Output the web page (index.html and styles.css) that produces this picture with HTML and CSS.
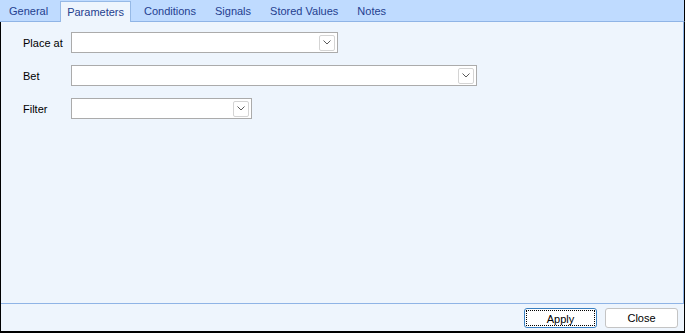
FILE: index.html
```html
<!DOCTYPE html>
<html lang="en">
<head>
  <meta charset="UTF-8" />
  <title>Parameters</title>
  <link rel="stylesheet" href="styles.css">
</head>
<body>

  <div class="window">
    <div class="tabs">
      <div class="tab">General</div>
      <div class="tab active">Parameters</div>
      <div class="tab">Conditions</div>
      <div class="tab">Signals</div>
      <div class="tab">Stored Values</div>
      <div class="tab">Notes</div>
    </div>

    <div class="frame">
      <div class="page">
        <div class="row">
          <span class="label">Place at</span>
          <div class="combo combo-md">
            <span class="drop">
              <svg width="8" height="5" viewBox="0 0 8 5"><polyline points="0.5,0.5 4,4 7.5,0.5" fill="none" stroke="#5a5a5a" stroke-width="1"/></svg>
            </span>
          </div>
        </div>
        <div class="row">
          <span class="label">Bet</span>
          <div class="combo combo-lg">
            <span class="drop">
              <svg width="8" height="5" viewBox="0 0 8 5"><polyline points="0.5,0.5 4,4 7.5,0.5" fill="none" stroke="#5a5a5a" stroke-width="1"/></svg>
            </span>
          </div>
        </div>
        <div class="row">
          <span class="label">Filter</span>
          <div class="combo combo-sm">
            <span class="drop">
              <svg width="8" height="5" viewBox="0 0 8 5"><polyline points="0.5,0.5 4,4 7.5,0.5" fill="none" stroke="#5a5a5a" stroke-width="1"/></svg>
            </span>
          </div>
        </div>
      </div>

      <div class="footer">
        <button class="btn default"><span class="focus">Apply</span></button>
        <button class="btn">Close</button>
      </div>
    </div>
  </div>

</body>
</html>
```

FILE: styles.css
```css
body {
  margin: 0;
  font-family: 'Liberation Sans', Arial, sans-serif;
  font-size: 11px;
  color: #000;
  background: #000;
}

.window {
  width: 685px;
  height: 333px;
  display: flex;
  flex-direction: column;
  background: #eef5fd;
}

.tabs {
  height: 22px;
  box-sizing: border-box;
  display: flex;
  align-items: flex-end;
  gap: 1px;
  padding-left: 1px;
  background: #bfdbff;
  border-bottom: 1px solid #8fb4e6;
  border-right: 1px solid #000;
}

.tab {
  height: 20px;
  line-height: 20px;
  padding: 0 9px;
  color: #24408f;
  white-space: nowrap;
}

.tab:first-child {
  padding: 0 8px;
}

.tab.active {
  height: 21px;
  margin-bottom: -1px;
  margin-left: 3px;
  margin-right: 3px;
  padding: 0 6px;
  line-height: 20px;
  background: #eef5fd;
  border: 1px solid #96b9e6;
  border-bottom: none;
  box-sizing: border-box;
}

.frame {
  flex: 1;
  display: flex;
  flex-direction: column;
  border-left: 1px solid #000;
  border-right: 1px solid #000;
  border-bottom: 2px solid #000;
}

.page {
  flex: 1;
  padding: 10px 0 0 22px;
  display: flex;
  flex-direction: column;
  gap: 12px;
  border-right: 1px solid #8fb4e6;
  border-bottom: 1px solid #8fb4e6;
}

.row {
  display: flex;
  align-items: center;
  height: 21px;
}

.label {
  width: 48px;
}

.combo {
  height: 21px;
  box-sizing: border-box;
  background: #fff;
  border: 1px solid #ababab;
  display: flex;
  justify-content: flex-end;
  align-items: center;
  padding-right: 2px;
}

.combo-md { width: 267px; }
.combo-lg { width: 406px; }
.combo-sm { width: 181px; }

.drop {
  width: 16px;
  height: 16px;
  box-sizing: border-box;
  border: 1px solid #d4d4d4;
  border-radius: 2px;
  display: flex;
  align-items: center;
  justify-content: center;
}

.footer {
  height: 27px;
  display: flex;
  justify-content: flex-end;
  align-items: center;
  gap: 8px;
  padding-right: 6px;
}

.btn {
  width: 73px;
  height: 20px;
  padding: 0;
  background: #fff;
  border: 1px solid #c4c4c4;
  border-radius: 3px;
  font-family: 'Liberation Sans', Arial, sans-serif;
  font-size: 11px;
  color: #000;
}

.btn.default {
  border-color: #3a7fc0;
  padding: 1px;
}

.focus {
  display: block;
  height: 100%;
  box-sizing: border-box;
  line-height: 16px;
  border: 1px dotted #000;
}
```
